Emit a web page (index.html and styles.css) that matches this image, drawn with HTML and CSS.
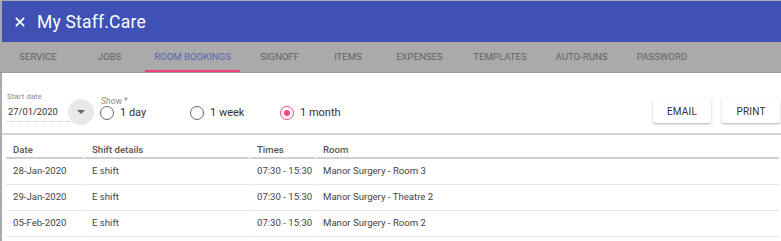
FILE: index.html
```html
<!DOCTYPE html>
<html>
<head>
<meta charset="utf-8">
<link rel="stylesheet" href="styles.css">
</head>
<body>
<div class="app">
  <header class="topbar">
    <svg class="close" width="10" height="10" viewBox="0 0 10 10"><path d="M0.8 0.8L9.2 9.2M9.2 0.8L0.8 9.2" stroke="#fff" stroke-width="1.7" fill="none"/></svg>
    <span class="title">My Staff.Care</span>
  </header>
  <nav class="tabs">
    <div class="tab">Service</div>
    <div class="tab">Jobs</div>
    <div class="tab active">Room bookings</div>
    <div class="tab">Signoff</div>
    <div class="tab">Items</div>
    <div class="tab">Expenses</div>
    <div class="tab">Templates</div>
    <div class="tab">Auto-runs</div>
    <div class="tab">Password</div>
  </nav>
  <section class="toolbar">
    <div class="datefield">
      <div class="field-label">Start date</div>
      <div class="field-value">27/01/2020</div>
    </div>
    <div class="dropbtn"><svg width="8" height="4" viewBox="0 0 8 4"><path d="M0 0H8L4 4Z" fill="#666"/></svg></div>
    <div class="show">
      <div class="show-label">Show *</div>
      <div class="radios">
        <div class="radio"><span class="ring"></span>1 day</div>
        <div class="radio"><span class="ring"></span>1 week</div>
        <div class="radio checked"><span class="ring"></span>1 month</div>
      </div>
    </div>
    <div class="actions">
      <button class="btn">EMAIL</button>
      <button class="btn">PRINT</button>
    </div>
  </section>
  <table class="grid">
    <thead>
      <tr><th class="c-date">Date</th><th class="c-shift">Shift details</th><th class="c-times">Times</th><th class="c-room">Room</th></tr>
    </thead>
    <tbody>
      <tr><td>28-Jan-2020</td><td>E shift</td><td>07:30 - 15:30</td><td>Manor Surgery - Room 3</td></tr>
      <tr><td>29-Jan-2020</td><td>E shift</td><td>07:30 - 15:30</td><td>Manor Surgery - Theatre 2</td></tr>
      <tr><td>05-Feb-2020</td><td>E shift</td><td>07:30 - 15:30</td><td>Manor Surgery - Room 2</td></tr>
    </tbody>
  </table>
</div>
</body>
</html>
```

FILE: styles.css
```css
html, body {
  margin: 0;
  padding: 0;
  background: #aaaaaa;
  height: 100%;
  overflow: hidden;
}
body {
  font-family: Roboto, "Liberation Sans", sans-serif;
}
.app {
  margin: 1px 0 0 2px;
  background: #fff;
  height: 240px;
}
.topbar {
  height: 41px;
  background: #3f51b5;
  display: flex;
  align-items: center;
  padding-left: 13px;
}
.close {
  display: block;
}
.title {
  color: #fff;
  font-size: 17.5px;
  font-weight: 400;
  margin-left: 12px;
  letter-spacing: 0.2px;
}
.tabs {
  display: grid;
  grid-template-columns: 72px 71px 95px 79px 58px 85px 76px 87px 74px;
  height: 30px;
  background: #aaaaaa;
  border-bottom: 1px solid #9c9c9c;
  margin-left: -2px;
  padding-left: 2px;
}
.tab {
  text-transform: uppercase;
  font-size: 9.6px;
  font-weight: 400;
  color: #636363;
  text-align: center;
  line-height: 30px;
  white-space: nowrap;
}
.tab.active {
  color: #5864b2;
  box-shadow: inset 0 -2px 0 #ec407a;
}
.toolbar {
  height: 60px;
  border-bottom: 2px solid #d2d2d2;
  display: flex;
  align-items: flex-start;
  padding-left: 5px;
}
.datefield {
  width: 63px;
  margin-top: 18px;
}
.field-label {
  font-size: 8px;
  line-height: 11px;
  color: #8a8a8a;
}
.field-value {
  margin-top: 2px;
  font-size: 9.4px;
  line-height: 16px;
  color: #333;
  padding-left: 1px;
  padding-bottom: 1px;
  border-bottom: 1px dotted #c4c4c4;
}
.dropbtn {
  width: 26px;
  height: 26px;
  border-radius: 50%;
  background: #e8e8e8;
  margin: 26px 0 0 -2px;
  display: flex;
  align-items: center;
  justify-content: center;
}
.dropbtn svg {
  display: block;
}
.show {
  margin: 23px 0 0 6px;
}
.show-label {
  font-size: 8.5px;
  line-height: 10px;
  color: #8a8a8a;
  padding-left: 1px;
}
.radios {
  display: flex;
  margin-top: -1px;
}
.radio {
  width: 90px;
  display: flex;
  align-items: center;
  font-size: 11px;
  line-height: 16px;
  color: #333;
}
.ring {
  box-sizing: border-box;
  width: 14px;
  height: 14px;
  border: 1.6px solid #666;
  border-radius: 50%;
  margin-right: 6px;
  display: flex;
  align-items: center;
  justify-content: center;
}
.radio.checked .ring {
  border-color: #ff4081;
}
.radio.checked .ring::after {
  content: "";
  width: 6px;
  height: 6px;
  border-radius: 50%;
  background: #ff4081;
}
.actions {
  margin: 26px 1px 0 auto;
  display: flex;
  gap: 11px;
}
.btn {
  font-family: Roboto, "Liberation Sans", sans-serif;
  font-size: 10px;
  font-weight: 400;
  color: #333;
  background: #fff;
  border: none;
  border-radius: 2px;
  height: 24px;
  width: 58px;
  padding: 0;
  box-shadow: 0 1px 3px rgba(0,0,0,0.22), 0 1px 1px rgba(0,0,0,0.1);
  letter-spacing: 0.2px;
}
.grid {
  border-collapse: separate;
  border-spacing: 1px 0;
  margin-left: 3px;
  width: calc(100% - 4px);
  table-layout: fixed;
  font-size: 9.6px;
}
.grid th, .grid td {
  box-sizing: border-box;
  padding-left: 7px;
  line-height: 14px;
}
.grid th {
  text-align: left;
  font-weight: 500;
  color: #555;
  padding-top: 8px;
  padding-bottom: 0;
  height: 22px;
  border-bottom: 2px solid #d0d0d0;
}
.grid td {
  color: #444;
  padding-top: 5px;
  padding-bottom: 6px;
  border-bottom: 1px solid #e4e4e4;
}
.c-date { width: 78px; }
.c-shift { width: 164px; }
.c-times { width: 65px; }
```
